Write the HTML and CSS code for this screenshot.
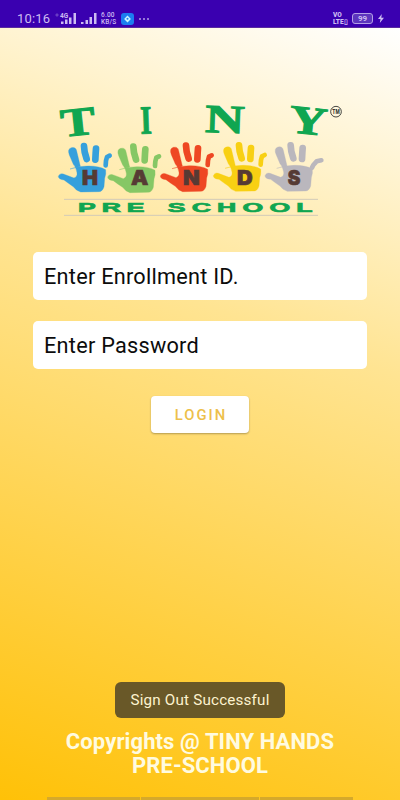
FILE: index.html
```html
<!DOCTYPE html>
<html lang="en">
<head>
    <meta charset="UTF-8">
    <meta name="viewport" content="width=device-width, initial-scale=1.0">
    <title>Tiny Hands Pre-School</title>
    <link rel="stylesheet" href="styles.css">
</head>
<body>
    <!-- Status bar -->
    <header class="status-bar">
        <span class="clock">10:16</span>
        <svg class="signals" width="44" height="14" viewBox="0 0 44 14">
            <circle cx="2" cy="3" r="1.1" class="sim"/>
            <text x="5" y="5.500" class="net">4G</text>
            <path d="M6 12V9.500h2.500V12zM10 12V7.500h2.500V12zM14 12V5.500h2.500V12zM18.500 12V1H21v11z"/>
            <path d="M26 12v-2h2.500v2zM30.500 12V8H33v4zM34.500 12V5H37v7zM39 12V1h2.500v11z"/>
        </svg>
        <span class="speed">6.00<br>KB/S</span>
        <svg class="app" width="13" height="12" viewBox="0 0 13 12">
            <rect width="13" height="12" rx="3" fill="#1c7df0"/>
            <path d="M6.500 2.600L9.900 6 6.500 9.400 3.100 6z" fill="#c9f4ff"/>
            <circle cx="6.500" cy="5.800" r="1" fill="#1c7df0"/>
        </svg>
        <span class="more"><i></i><i></i><i></i></span>
        <span class="volte">VO<br>LTE▯</span>
        <span class="battery">99</span>
        <svg class="bolt" width="6" height="9" viewBox="0 0 6 9">
            <path d="M3.800 0L0 5h2.500L1.800 9 6 3.800H3.300z"/>
        </svg>
    </header>

    <main class="screen">
        <svg class="logo" width="300" height="130" viewBox="0 0 900 390">
            <defs>
                <g id="palm">
                    <path d="M60 222Q90 212 116 213Q148 213 167 224Q169 237 164 250L162 275Q157 291 145 290L92 291Q78 287 70 275Q55 265 42 255Q25 253 25 244Q29 234 40 237L72 249Q83 245 81 233Q78 216 70 208L58 180Q51 162 64 158Q78 155 80 168L91 214Z"/>
                    <path class="finger" d="M102 153l2 18 6 21"/>
                    <path class="finger" d="M138 161l-1 14-1 19"/>
                </g>
                <g id="hand">
                    <use href="#palm"/>
                    <path class="pinky" d="M179 182l-8 4-3 11-1 14"/>
                </g>
            </defs>

            <g class="tiny">
                <text transform="translate(36 126) rotate(-6)" textLength="104" lengthAdjust="spacingAndGlyphs">T</text>
                <text transform="translate(272 116) rotate(-2)" textLength="34" lengthAdjust="spacingAndGlyphs">I</text>
                <text transform="translate(464 111) rotate(2)" textLength="118" lengthAdjust="spacingAndGlyphs">N</text>
                <text transform="translate(714 111) rotate(6)" textLength="114" lengthAdjust="spacingAndGlyphs">Y</text>
            </g>
            <circle cx="858" cy="50" r="16" class="tm-ring"/>
            <text x="847" y="57" class="tm" textLength="22" lengthAdjust="spacingAndGlyphs">TM</text>

            <use href="#hand" class="blue"/>
            <use href="#hand" x="148" y="2" class="green"/>
            <use href="#hand" x="306" y="-1" class="red"/>
            <use href="#hand" x="465" y="-2" class="yellow"/>
            <g class="gray">
                <use href="#palm" x="620" y="-2"/>
                <path class="pinky" d="M814 196l-14 3-10 11-4 8"/>
            </g>

            <g class="hands">
                <text x="96" y="270" textLength="48" lengthAdjust="spacingAndGlyphs">H</text>
                <text x="243" y="271" textLength="52" lengthAdjust="spacingAndGlyphs">A</text>
                <text x="399" y="271" textLength="50" lengthAdjust="spacingAndGlyphs">N</text>
                <text x="561" y="271" textLength="47" lengthAdjust="spacingAndGlyphs">D</text>
                <text x="713" y="271" textLength="38" lengthAdjust="spacingAndGlyphs">S</text>
            </g>

            <path class="rule" d="M42 313H804M42 361H804"/>
            <g class="pre-school">
                <text transform="translate(84 351) scale(2.100 1)" textLength="95">PRE</text>
                <text transform="translate(353 351) scale(2.100 1)" textLength="207">SCHOOL</text>
            </g>
        </svg>

        <form class="login">
            <input type="text" placeholder="Enter Enrollment ID.">
            <input type="password" placeholder="Enter Password">
            <button type="button">LOGIN</button>
        </form>

        <div class="toast">Sign Out Successful</div>
        <div class="copyright">Copyrights @ TINY HANDS<br>PRE-SCHOOL</div>
        <div class="tabs"><span></span><span></span><span></span></div>
    </main>
</body>
</html>
```
FILE: styles.css
```css
body {
    font-family: Roboto, sans-serif;
    margin: 0;
    height: 100vh;
    display: flex;
    flex-direction: column;
    overflow: hidden;
}
.status-bar {
    height: 28px;
    box-sizing: border-box;
    padding: 10px 16px 0 17px;
    display: flex;
    align-items: center;
    background-color: #3a00b0;
    border-bottom: 1px solid #5a2aa0;
    color: #cdbcf2;
    fill: #cdbcf2;
}
.clock {
    width: 38px;
    font-size: 13px;
    letter-spacing: 0.2px;
}
.signals {
    width: 44px;
    margin-right: 2px;
}
.sim {
    fill: none;
    stroke: #8f6fd6;
    stroke-width: 0.7px;
}
.net {
    font-size: 6.5px;
    font-weight: bold;
}
.speed {
    width: 20px;
    font-size: 6.5px;
    font-weight: 500;
    letter-spacing: 0.2px;
    line-height: 7px;
}
.more {
    display: flex;
    gap: 2px;
    margin-left: 5px;
}
.more i {
    width: 2px;
    height: 2px;
    border-radius: 1px;
    background-color: #b49fe6;
}
.volte {
    margin-left: auto;
    width: 19px;
    font-size: 6.5px;
    font-weight: 900;
    line-height: 7px;
    white-space: nowrap;
}
.battery {
    width: 19px;
    height: 9px;
    border: 1px solid #b49fe6;
    border-radius: 3px;
    background-color: #5d35bd;
    font-size: 8px;
    font-weight: bold;
    line-height: 9px;
    text-align: center;
}
.bolt {
    margin-left: 5px;
}
.screen {
    flex: 1;
    display: flex;
    flex-direction: column;
    align-items: center;
    background: linear-gradient(20deg, #ffc107, #ffe492 62%, #fff);
}
.logo {
    margin-top: 67px;
}
.tiny {
    font-family: "Liberation Serif", serif;
    font-size: 120px;
    font-weight: bold;
    fill: #10a651;
    stroke: #10a651;
    stroke-width: 3px;
}
.finger, .pinky {
    fill: none;
    stroke-width: 20px;
    stroke-linecap: round;
    stroke-linejoin: round;
}
.pinky {
    stroke-width: 14px;
}
.blue { fill: #36a0dc; stroke: #36a0dc; }
.green { fill: #86c765; stroke: #86c765; }
.red { fill: #ee4723; stroke: #ee4723; }
.yellow { fill: #f8d013; stroke: #f8d013; }
.gray { fill: #bab7bd; stroke: #bab7bd; }
.hands {
    font-family: Inter, sans-serif;
    font-size: 60px;
    font-weight: 900;
    fill: #563a34;
    stroke: #563a34;
    stroke-width: 2px;
}
.pre-school {
    font-family: "Liberation Sans", sans-serif;
    font-size: 38px;
    font-weight: bold;
    fill: #10a651;
    stroke: #10a651;
    stroke-width: 2px;
}
.rule {
    stroke: #d2cab8;
    stroke-width: 3px;
}
.tm-ring {
    fill: none;
    stroke: #222;
    stroke-width: 2.5px;
}
.tm {
    font-family: "Liberation Sans", sans-serif;
    font-size: 19px;
    font-weight: bold;
    fill: #222;
}
.login {
    width: 334px;
    margin-top: 27px;
    display: flex;
    flex-direction: column;
    align-items: center;
}
.login input {
    width: 100%;
    height: 48px;
    margin-bottom: 21px;
    padding: 1px 11px 0;
    box-sizing: border-box;
    border: none;
    border-radius: 5px;
    background-color: #fff;
    font-family: inherit;
    font-size: 21.7px;
    letter-spacing: 0.25px;
}
.login input::placeholder {
    color: #0c0c0c;
}
.login button {
    width: 98px;
    height: 37px;
    margin-top: 6px;
    padding: 1px 0 0 2px;
    border: none;
    border-radius: 4px;
    background-color: #fff;
    box-shadow: 0 1px 2px rgba(0, 0, 0, 0.3);
    color: #edc04a;
    font-family: inherit;
    font-size: 14.8px;
    font-weight: 500;
    letter-spacing: 2px;
}
.toast {
    width: 170px;
    height: 36px;
    margin-top: auto;
    border-radius: 6px;
    background-color: #695828;
    color: #fdf3cf;
    font-size: 15.2px;
    letter-spacing: 0.2px;
    line-height: 37px;
    text-align: center;
}
.copyright {
    margin: 12px 0 19px;
    color: #fffbe0;
    font-size: 22px;
    font-weight: bold;
    letter-spacing: 0.1px;
    line-height: 24px;
    text-align: center;
}
.tabs {
    width: 306px;
    height: 3px;
    display: grid;
    grid-template-columns: 93px 118px 93px;
    gap: 1px;
}
.tabs span {
    background-color: #d5a92b;
}
```
